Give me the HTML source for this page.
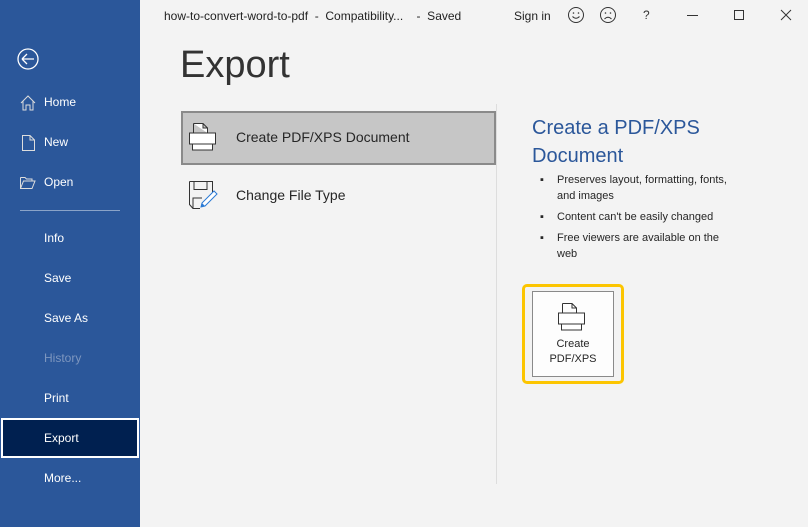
<!DOCTYPE html>
<html><head><style>
*{margin:0;padding:0;box-sizing:border-box}
body{width:808px;height:527px;overflow:hidden;background:#f3f3f3;font-family:"Segoe UI","Liberation Sans",sans-serif;position:relative;color:#262626}
.side{position:absolute;left:0;top:0;width:140px;height:527px;background:#2b579a;color:#fff}
.it{position:absolute;left:44px;font-size:12px}
.a{position:absolute;font-size:12px}
svg{position:absolute}
</style></head><body>
<div class="side">
<svg style="left:16px;top:47px" width="24" height="24"><circle cx="12" cy="12" r="10" fill="none" stroke="#fff" stroke-width="1.3"/><path d="M6 12H18M6 12L11 7M6 12L11 17" stroke="#fff" stroke-width="1.3" fill="none"/></svg>
<svg style="left:19px;top:94px" width="18" height="18"><path d="M2 9L9 2L16 9M4 7V16H7V11H11V16H14V7" stroke="#ddd" fill="none"/></svg>
<div class="it" style="top:95px">Home</div>
<svg style="left:21px;top:134px" width="16" height="18"><path d="M1.5 1.5H9L13.5 6V16.5H1.5Z M9 1.5V6H13.5" stroke="#ddd" fill="none"/></svg>
<div class="it" style="top:135px">New</div>
<svg style="left:19px;top:176px" width="18" height="14"><path d="M1.5 1.5H6L7.5 3H13V5 M1.5 1.5V12.5H13L16 5H4.5L1.5 12.5" stroke="#ddd" fill="none"/></svg>
<div class="it" style="top:175px">Open</div>
<div style="position:absolute;left:20px;top:210px;width:100px;height:1px;background:#8aa3c8"></div>
<div class="it" style="top:231px">Info</div>
<div class="it" style="top:271px">Save</div>
<div class="it" style="top:311px">Save As</div>
<div class="it" style="top:351px;color:#7d96bf">History</div>
<div class="it" style="top:391px">Print</div>
<div style="position:absolute;left:1px;top:418px;width:138px;height:40px;background:#002050;border:2px solid #fff"></div>
<div class="it" style="top:431px">Export</div>
<div class="it" style="top:471px">More...</div>
</div>
<div class="a" style="left:164px;top:9px;color:#222">how-to-convert-word-to-pdf&nbsp; -&nbsp; Compatibility...&nbsp;&nbsp;&nbsp; -&nbsp; Saved</div>
<div class="a" style="left:514px;top:9px;color:#222">Sign in</div>
<svg style="left:567px;top:6px" width="18" height="18"><circle cx="9" cy="9" r="7.5" fill="none" stroke="#333"/><circle cx="6.5" cy="7" r=".8" fill="#333"/><circle cx="11.5" cy="7" r=".8" fill="#333"/><path d="M5.5 10.5Q9 14 12.5 10.5" stroke="#333" fill="none"/></svg>
<svg style="left:599px;top:6px" width="18" height="18"><circle cx="9" cy="9" r="7.5" fill="none" stroke="#333"/><circle cx="6.5" cy="7" r=".8" fill="#333"/><circle cx="11.5" cy="7" r=".8" fill="#333"/><path d="M5.5 13Q9 9.5 12.5 13" stroke="#333" fill="none"/></svg>
<div class="a" style="left:643px;top:8px;color:#333">?</div>
<div style="position:absolute;left:687px;top:15px;width:11px;height:1px;background:#333"></div>
<div style="position:absolute;left:734px;top:10px;width:10px;height:10px;border:1px solid #333"></div>
<svg style="left:780px;top:9px" width="12" height="12"><path d="M1 1L11 11M11 1L1 11" stroke="#333"/></svg>
<div style="position:absolute;left:180px;top:44px;font-size:38px;font-weight:300;color:#333">Export</div>
<div style="position:absolute;left:181px;top:111px;width:315px;height:54px;background:#c6c6c6;border:2px solid #8a8a8a"></div>
<svg style="left:188px;top:122px" width="30" height="30"><path d="M5.5 1.5H15L19.5 6V11 M5.5 1.5V11 M15 1.5V6H19.5" stroke="#333" fill="#fff"/><rect x="1.5" y="11" width="26" height="11" fill="#fff" stroke="#333"/><rect x="4.5" y="22" width="20" height="6" fill="#fff" stroke="#333"/></svg>
<div style="position:absolute;left:236px;top:129px;font-size:14px;color:#262626">Create PDF/XPS Document</div>
<svg style="left:188px;top:180px" width="32" height="32"><path d="M1.5 1.5H24.5V12 M1.5 1.5V24.5L5 28.5H12 M6 1.5V9.5H19V1.5 M5 28.5V18H14" stroke="#333" fill="none"/><path d="M13 27L14 23L26 11L29 14L17 26Z" stroke="#2a7ad5" fill="#fff"/><path d="M13 27L14 23L17 26Z" fill="#2a7ad5"/></svg>
<div style="position:absolute;left:236px;top:187px;font-size:14px">Change File Type</div>
<div style="position:absolute;left:496px;top:104px;width:1px;height:380px;background:#ddd"></div>
<div style="position:absolute;left:532px;top:114px;font-size:20px;line-height:28px;color:#2b579a;font-weight:300">Create a PDF/XPS<br>Document</div>
<div style="position:absolute;left:540px;top:172px;font-size:11px;line-height:16px;color:#262626;width:230px">
<div style="position:relative;padding-left:17px">Preserves layout, formatting, fonts,<br>and images<span style="position:absolute;left:0;top:0">▪</span></div>
<div style="position:relative;padding-left:17px;margin-top:5px">Content can't be easily changed<span style="position:absolute;left:0;top:0">▪</span></div>
<div style="position:relative;padding-left:17px;margin-top:5px">Free viewers are available on the<br>web<span style="position:absolute;left:0;top:0">▪</span></div>
</div>
<div style="position:absolute;left:522px;top:284px;width:102px;height:100px;border:3px solid #fcc500;border-radius:5px"></div>
<div style="position:absolute;left:532px;top:291px;width:82px;height:86px;border:1px solid #8a8a8a;background:#fdfdfd"></div>
<svg style="left:557px;top:302px" width="30" height="30"><path d="M5.5 1.5H15L19.5 6V11 M5.5 1.5V11 M15 1.5V6H19.5" stroke="#333" fill="#fff"/><rect x="1.5" y="11" width="26" height="11" fill="#fff" stroke="#333"/><rect x="4.5" y="22" width="20" height="6" fill="#fff" stroke="#333"/></svg>
<div style="position:absolute;left:532px;top:337px;width:82px;text-align:center;font-size:11px;line-height:15px">Create<br>PDF/XPS</div>
</body></html>
